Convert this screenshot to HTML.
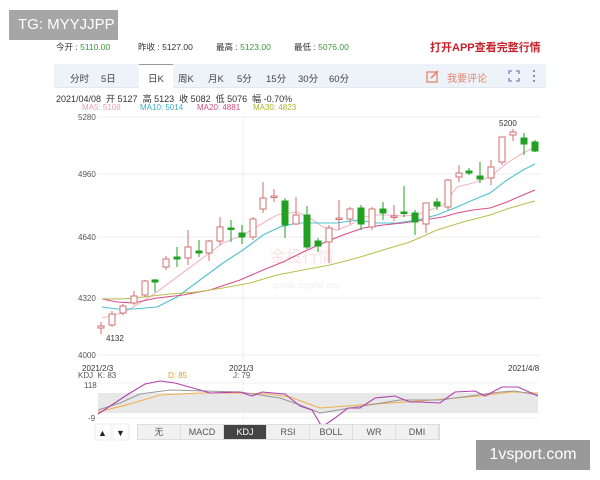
<!DOCTYPE html>
<html><head><meta charset="utf-8"><style>
*{margin:0;padding:0;box-sizing:border-box}
body{width:600px;height:480px;background:#fff;position:relative;overflow:hidden;font-family:"Liberation Sans","Noto Sans CJK SC",sans-serif;}
.abs{position:absolute;white-space:nowrap}
.tg{left:9px;top:10px;width:109px;height:30px;background:#a6a6a6;color:#fff;font-size:15px;line-height:30px;padding-left:9px}
.row1{top:41px;font-size:8.5px;color:#333}
.g{color:#3a9a3a}
.bar{left:54px;top:64px;width:492px;height:24px;background:#eef3f9;border-bottom:1px solid #e2e8f0}
.bar span{position:absolute;top:7px;font-size:9.5px;color:#444}
.act{position:absolute;left:85px;top:0;width:34px;height:24px;background:#fff;border-top:1px solid #999}
.tabs{top:424px;left:137px;height:16px;display:flex;border:1px solid #ddd}
.tabs div{width:43px;height:14px;font-size:9px;line-height:14px;text-align:center;color:#555;background:#f1f1f1;border-right:1px solid #ddd}
.tabs .k{background:#444;color:#fff}
.wm{left:476px;top:440px;width:114px;height:30px;background:#999;color:#fff;font-size:16px;line-height:30px;text-align:center}
</style></head><body>
<div class="abs tg">TG: MYYJJPP</div>
<div class="abs row1" style="left:56px">今开 : <span class="g">5110.00</span></div>
<div class="abs row1" style="left:138px">昨收 : <span>5127.00</span></div>
<div class="abs row1" style="left:216px">最高 : <span class="g">5123.00</span></div>
<div class="abs row1" style="left:294px">最低 : <span class="g">5076.00</span></div>
<div class="abs" style="left:430px;top:39px;font-size:11px;font-weight:bold;color:#c8232c">打开APP查看完整行情</div>
<div class="abs bar">
<div class="act"></div>
<span style="left:16px">分时</span><span style="left:47px">5日</span><span style="left:94px">日K</span><span style="left:124px">周K</span><span style="left:154px">月K</span><span style="left:183px">5分</span><span style="left:212px">15分</span><span style="left:244px">30分</span><span style="left:275px">60分</span>
<svg style="position:absolute;left:372px;top:5px" width="14" height="14"><rect x="1" y="3" width="10" height="10" fill="none" stroke="#e8836a" stroke-width="1.3"/><path d="M5 9 L12 2" stroke="#e8836a" stroke-width="1.6"/></svg>
<span style="left:393px;color:#e8836a;font-size:10px;top:6px">我要评论</span>
<svg style="position:absolute;left:454px;top:6px" width="12" height="12" fill="none" stroke="#6a8ab8" stroke-width="1.3"><path d="M1 4V1H4M8 1H11V4M11 8V11H8M4 11H1V8"/></svg>
<svg style="position:absolute;left:478px;top:5px" width="4" height="14" fill="#6a8ab8"><circle cx="2" cy="2" r="1.1"/><circle cx="2" cy="7" r="1.1"/><circle cx="2" cy="12" r="1.1"/></svg>
</div>
<div class="abs" style="left:56px;top:92px;font-size:9px;color:#333">2021/04/08 &nbsp;开 5127 &nbsp;高 5123 &nbsp;收 5082 &nbsp;低 5076 &nbsp;幅 -0.70%</div>
<div class="abs" style="left:82px;top:103px;font-size:8px;color:#e8a0b8">MA5: 5108</div>
<div class="abs" style="left:140px;top:103px;font-size:8px;color:#38b0c8">MA10: 5014</div>
<div class="abs" style="left:197px;top:103px;font-size:8px;color:#d05080">MA20: 4881</div>
<div class="abs" style="left:253px;top:103px;font-size:8px;color:#a8b830">MA30: 4823</div>
<svg class="abs" style="left:0;top:0" width="600" height="480" font-family="Liberation Sans" font-size="8" fill="#555">
<g stroke="#eee" stroke-width="1">
<line x1="98" y1="117" x2="540" y2="117"/><line x1="98" y1="174" x2="540" y2="174"/><line x1="98" y1="237" x2="540" y2="237"/><line x1="98" y1="298" x2="540" y2="298"/><line x1="98" y1="355" x2="540" y2="355"/><line x1="243" y1="117" x2="243" y2="420"/>
</g>
<text x="78" y="120">5280</text><text x="78" y="177">4960</text><text x="78" y="240">4640</text><text x="78" y="301">4320</text><text x="78" y="358">4000</text>
<text x="106" y="341" fill="#333">4132</text><text x="499" y="126" fill="#333">5200</text>
<text x="270" y="262" font-size="16" fill="#f8e4e4">金投行情</text>
<text x="272" y="288" font-size="9" fill="#f0f0f0">quote.cngold.org</text>
<g fill="none" stroke-width="1.1">
<polyline stroke="#f0b8c8" points="102,318 123,313 140,303 157,292 177,277 200,260 223,243 243,235 263,223 277,215 290,213 297,212 310,218 323,227 337,230 350,225 363,217 377,215 390,215 403,216 417,215 430,210 443,205 457,187 473,183 490,177 507,163 523,153 535,147"/>
<polyline stroke="#4cc0d0" points="102,307 117,309 133,309 157,307 177,297 200,280 223,263 243,250 263,235 280,227 297,223 317,223 337,223 357,220 377,223 397,223 417,220 437,215 457,207 473,200 490,193 507,180 523,170 535,164"/>
<polyline stroke="#d8508a" points="102,299 117,302 133,303 157,298 183,295 210,290 240,280 263,270 283,262 303,252 323,243 343,235 363,228 383,225 403,223 423,220 443,217 457,213 473,210 490,208 507,202 523,195 535,190"/>
<polyline stroke="#b8c050" points="102,299 123,299 143,297 170,294 197,292 223,288 250,283 277,275 303,270 330,265 357,258 383,250 410,242 437,230 463,222 490,215 510,208 535,201"/>
</g>
<g stroke-width="1">
<g stroke="#d07070" fill="#fff">
<path d="M101 322V334M112 311V327M123 304V315M134 291V305M145 280V297M166 256V270M188 230V265M209 240V261M220 217V245M253 217V240M263 182V213M274 189V202M296 197V225M329 225V263M339 200V230M350 207V224M372 207V230M394 205V221M426 205V233M448 179V210M459 165V182M491 160V185M502 137V165M513 129V141"/>
<rect x="98" y="326" width="6" height="2"/><rect x="109" y="314" width="6" height="11"/><rect x="120" y="306" width="6" height="7"/><rect x="131" y="296" width="6" height="7"/><rect x="142" y="281" width="6" height="14"/><rect x="163" y="259" width="6" height="8"/><rect x="185" y="247" width="6" height="11"/><rect x="206" y="241" width="6" height="12"/><rect x="217" y="227" width="6" height="14"/><rect x="250" y="219" width="6" height="18"/><rect x="260" y="198" width="6" height="11"/><rect x="271" y="196" width="6" height="1.5"/><rect x="293" y="215" width="6" height="9"/><rect x="326" y="228" width="6" height="14"/><rect x="336" y="218" width="6" height="1.5"/><rect x="347" y="209" width="6" height="10"/><rect x="369" y="209" width="6" height="18"/><rect x="391" y="216" width="6" height="1.5"/><rect x="423" y="203" width="6" height="21"/><rect x="445" y="180" width="6" height="27"/><rect x="456" y="173" width="6" height="4"/><rect x="488" y="167" width="6" height="11"/><rect x="499" y="137" width="6" height="25"/><rect x="510" y="132" width="6" height="3"/>
</g>
<g stroke="#22a022" fill="#22a022">
<path d="M155 279V292M177 247V267M199 240V257M231 220V242M242 225V244M285 198V238M307 206V249M318 238V252M361 205V230M383 202V220M404 186V217M415 210V235M437 198V210M469 168V175M480 162V183M524 133V155M535 140V152"/>
<rect x="152" y="280" width="6" height="2"/><rect x="174" y="257" width="6" height="2"/><rect x="196" y="251" width="6" height="2"/><rect x="228" y="228" width="6" height="1.5"/><rect x="239" y="233" width="6" height="4"/><rect x="282" y="201" width="6" height="24"/><rect x="304" y="215" width="6" height="32"/><rect x="315" y="241" width="6" height="5"/><rect x="358" y="208" width="6" height="16"/><rect x="380" y="209" width="6" height="4"/><rect x="401" y="212" width="6" height="1.5"/><rect x="412" y="213" width="6" height="9"/><rect x="434" y="202" width="6" height="4"/><rect x="466" y="171" width="6" height="2"/><rect x="477" y="176" width="6" height="3"/><rect x="521" y="138" width="6" height="6"/><rect x="532" y="142" width="6" height="9"/>
</g>
</g>
<text x="82" y="371" fill="#333">2021/2/3</text><text x="229" y="371" fill="#333">2021/3</text><text x="508" y="371" fill="#333">2021/4/8</text>
<text x="78" y="378">KDJ &#160;K: 83</text><text x="168" y="378" fill="#e0a030">D: 85</text><text x="233" y="378">J: 79</text>
<text x="84" y="388">118</text><text x="88" y="421">-9</text>
<rect x="98" y="393" width="440" height="20" fill="#e8e8e8"/>
<line x1="98" y1="383" x2="538" y2="383" stroke="#f0f0f0"/><line x1="98" y1="418" x2="538" y2="418" stroke="#f0f0f0"/>
<g fill="none" stroke-width="1.1">
<polyline stroke="#f0b050" points="98,412 130,404 160,395 200,393 240,393 270,394 290,397 320,408 360,405 420,401 480,396 510,392 538,393"/>
<polyline stroke="#999" points="98,410 120,403 140,394 170,390 240,392 280,398 300,405 320,413 350,408 400,400 440,400 470,396 500,392 515,391 538,395"/>
<polyline stroke="#b040b0" points="98,414 130,393 145,384 160,381 175,383 200,390 210,393 240,392 252,396 262,392 285,394 300,406 312,410 322,427 335,418 348,408 360,408 375,398 395,396 410,402 420,402 440,403 455,392 475,391 485,396 502,387 518,387 538,396"/>
</g>
<rect x="95" y="424" width="16" height="16" fill="#fff" stroke="#eee"/><text x="98" y="436" font-size="9" fill="#222">▲</text>
<rect x="113" y="424" width="16" height="16" fill="#fff" stroke="#eee"/><text x="116" y="436" font-size="9" fill="#222">▼</text>
</svg>
<div class="abs tabs"><div>无</div><div>MACD</div><div class="k">KDJ</div><div>RSI</div><div>BOLL</div><div>WR</div><div>DMI</div></div>
<div class="abs wm">1vsport.com</div>
</body></html>
